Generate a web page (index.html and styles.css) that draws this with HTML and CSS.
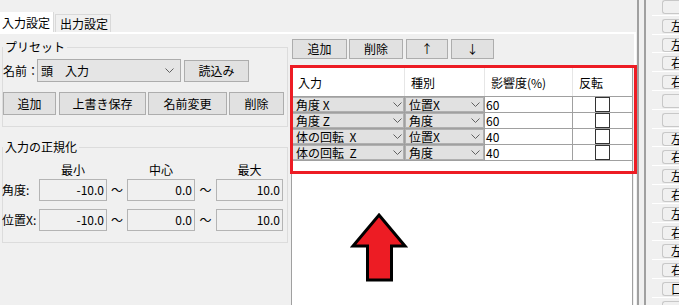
FILE: index.html
```html
<!DOCTYPE html>
<html lang="ja">
<head>
  <meta charset="UTF-8">
  <meta name="viewport" content="width=device-width, initial-scale=1.0">
  <title>入力設定</title>
  <link rel="stylesheet" href="styles.css">
</head>
<body>
  <div class="app">
    <div class="main">
      <div class="tabs">
        <div class="tab active">入力設定</div>
        <div class="tab">出力設定</div>
      </div>
      <div class="page">
        <div class="left">
          <fieldset class="group preset">
            <legend>プリセット</legend>
            <div class="preset-row">
              <span class="name-label">名前：</span>
              <div class="combo preset-combo">
                <span>頭　入力</span>
                <svg class="chev" width="9" height="5" viewBox="0 0 9 5"><polyline points="0.5,0.5 4.5,4.5 8.5,0.5" fill="none" stroke="#606060" stroke-width="1"/></svg>
              </div>
              <button class="btn load">読込み</button>
            </div>
            <div class="preset-buttons">
              <button class="btn b-add">追加</button>
              <button class="btn b-save">上書き保存</button>
              <button class="btn b-rename">名前変更</button>
              <button class="btn b-del">削除</button>
            </div>
          </fieldset>

          <fieldset class="group norm">
            <legend>入力の正規化</legend>
            <div class="norm-head">
              <span class="norm-label"></span>
              <span class="head w68">最小</span>
              <span class="tilde"></span>
              <span class="head w68">中心</span>
              <span class="tilde t21"></span>
              <span class="head w67">最大</span>
            </div>
            <div class="norm-row">
              <span class="norm-label">角度:</span>
              <div class="field w68">-10.0</div>
              <span class="tilde">～</span>
              <div class="field w68">0.0</div>
              <span class="tilde t21">～</span>
              <div class="field w67">10.0</div>
            </div>
            <div class="norm-row second">
              <span class="norm-label">位置X:</span>
              <div class="field w68">-10.0</div>
              <span class="tilde">～</span>
              <div class="field w68">0.0</div>
              <span class="tilde t21">～</span>
              <div class="field w67">10.0</div>
            </div>
          </fieldset>
        </div>

        <div class="right">
          <div class="toolbar">
            <button class="btn t-add">追加</button>
            <button class="btn t-del">削除</button>
            <button class="btn t-up">↑</button>
            <button class="btn t-down">↓</button>
          </div>
          <div class="grid">
            <div class="grid-head">
              <div class="hcell">入力</div>
              <div class="hcell">種別</div>
              <div class="hcell">影響度(%)</div>
              <div class="hcell last">反転</div>
            </div>
            <div class="grid-row">
              <div class="cell combo-cell c1"><span>角度 X</span><svg class="chev" width="9" height="5" viewBox="0 0 9 5"><polyline points="0.5,0.5 4.5,4.5 8.5,0.5" fill="none" stroke="#606060" stroke-width="1"/></svg></div>
              <div class="cell combo-cell c2"><span>位置X</span><svg class="chev" width="9" height="5" viewBox="0 0 9 5"><polyline points="0.5,0.5 4.5,4.5 8.5,0.5" fill="none" stroke="#606060" stroke-width="1"/></svg></div>
              <div class="cell num">60</div>
              <div class="cell check-cell last"><span class="check"></span></div>
            </div>
            <div class="grid-row">
              <div class="cell combo-cell c1"><span>角度 Z</span><svg class="chev" width="9" height="5" viewBox="0 0 9 5"><polyline points="0.5,0.5 4.5,4.5 8.5,0.5" fill="none" stroke="#606060" stroke-width="1"/></svg></div>
              <div class="cell combo-cell c2"><span>角度</span><svg class="chev" width="9" height="5" viewBox="0 0 9 5"><polyline points="0.5,0.5 4.5,4.5 8.5,0.5" fill="none" stroke="#606060" stroke-width="1"/></svg></div>
              <div class="cell num">60</div>
              <div class="cell check-cell last"><span class="check"></span></div>
            </div>
            <div class="grid-row">
              <div class="cell combo-cell c1"><span>体の回転  X</span><svg class="chev" width="9" height="5" viewBox="0 0 9 5"><polyline points="0.5,0.5 4.5,4.5 8.5,0.5" fill="none" stroke="#606060" stroke-width="1"/></svg></div>
              <div class="cell combo-cell c2"><span>位置X</span><svg class="chev" width="9" height="5" viewBox="0 0 9 5"><polyline points="0.5,0.5 4.5,4.5 8.5,0.5" fill="none" stroke="#606060" stroke-width="1"/></svg></div>
              <div class="cell num">40</div>
              <div class="cell check-cell last"><span class="check"></span></div>
            </div>
            <div class="grid-row">
              <div class="cell combo-cell c1"><span>体の回転  Z</span><svg class="chev" width="9" height="5" viewBox="0 0 9 5"><polyline points="0.5,0.5 4.5,4.5 8.5,0.5" fill="none" stroke="#606060" stroke-width="1"/></svg></div>
              <div class="cell combo-cell c2"><span>角度</span><svg class="chev" width="9" height="5" viewBox="0 0 9 5"><polyline points="0.5,0.5 4.5,4.5 8.5,0.5" fill="none" stroke="#606060" stroke-width="1"/></svg></div>
              <div class="cell num">40</div>
              <div class="cell check-cell last"><span class="check"></span></div>
            </div>
          </div>
        </div>
      </div>
    </div>

    <div class="splitter"></div>

    <div class="side">
      <div class="side-row"><span class="side-btn"></span></div>
      <div class="side-row"><span class="side-btn">左</span></div>
      <div class="side-row"><span class="side-btn">左</span></div>
      <div class="side-row"><span class="side-btn">右</span></div>
      <div class="side-row"><span class="side-btn">右</span></div>
      <div class="side-row"><span class="side-btn"></span></div>
      <div class="side-row"><span class="side-btn"></span></div>
      <div class="side-row"><span class="side-btn">左</span></div>
      <div class="side-row"><span class="side-btn">右</span></div>
      <div class="side-row"><span class="side-btn">左</span></div>
      <div class="side-row"><span class="side-btn">右</span></div>
      <div class="side-row"><span class="side-btn">左</span></div>
      <div class="side-row"><span class="side-btn">右</span></div>
      <div class="side-row"><span class="side-btn">左</span></div>
      <div class="side-row"><span class="side-btn">右</span></div>
      <div class="side-row"><span class="side-btn">口</span></div>
      <div class="side-row"><span class="side-btn"></span></div>
    </div>
  </div>

  <!-- annotation drawn over the screenshot -->
  <div class="annot-box"></div>
  <svg class="annot-arrow" width="64" height="78" viewBox="0 0 64 78">
    <polygon points="31,7 57,38 43.5,38 43.5,72 19.5,72 19.5,38 5,38" fill="#ed1c24" stroke="#000" stroke-width="3" stroke-linejoin="miter"/>
  </svg>
</body>
</html>
```

FILE: styles.css
```css
* {
  box-sizing: border-box;
}
body {
  margin: 0;
  width: 679px;
  height: 305px;
  overflow: hidden;
  position: relative;
  background-color: #f0f0f0;
  font-family: "Noto Sans CJK JP", "Noto Sans", sans-serif;
  font-size: 12px;
  line-height: 14px;
  color: #000;
}
.app {
  display: flex;
  height: 305px;
}
.main {
  width: 636px;
  flex: none;
}

/* tabs */
.tabs {
  height: 32px;
  display: flex;
  align-items: flex-end;
}
.tab {
  height: 18px;
  width: 56px;
  margin-left: 1px;
  padding: 2px 0 0 4px;
  border: 1px solid #d9d9d9;
  border-bottom: none;
  white-space: nowrap;
}
.tab.active {
  height: 20px;
  width: 54px;
  margin-left: 0;
  padding: 4px 0 0 2px;
  background: #fff;
  border: none;
  border-right: 1px solid #d9d9d9;
}
.page {
  display: flex;
  height: 273px;
  border-top: 2px solid #fff;
  border-right: 2px solid #fff;
}

/* left column */
.left {
  width: 290px;
  flex: none;
}
.group {
  margin: 6px 0 0 2px;
  padding: 5px 0 11px 0;
  width: 286px;
  min-width: 0;
  border: 1px solid #dcdcdc;
}
.group legend {
  padding: 0 2px;
  line-height: 14px;
}
.group.norm {
  margin-top: 13px;
  padding-top: 9px;
}
.preset-row {
  display: flex;
  align-items: center;
  height: 23px;
}
.name-label {
  width: 34px;
  white-space: nowrap;
}
.combo {
  display: flex;
  align-items: center;
  justify-content: space-between;
  background: #e5e5e5;
  border: 1px solid #acacac;
}
.preset-combo {
  width: 144px;
  height: 23px;
  padding: 0 6px 0 3px;
}
.chev {
  display: block;
  flex: none;
}
.btn {
  font: inherit;
  color: #000;
  background: #e1e1e1;
  border: 1px solid #adadad;
  padding: 0;
  margin: 0;
  text-align: center;
}
.load {
  width: 65px;
  height: 22px;
  margin-left: 3px;
}
.preset-buttons {
  display: flex;
  margin-top: 10px;
}
.preset-buttons .btn {
  height: 23px;
}
.b-add { width: 53px; }
.b-save { width: 87px; margin-left: 3px; }
.b-rename { width: 79px; margin-left: 2px; }
.b-del { width: 55px; margin-left: 2px; }

.norm-head {
  display: flex;
  height: 16px;
}
.norm-row {
  display: flex;
  align-items: center;
  height: 22px;
}
.norm-row.second {
  margin-top: 8px;
}
.norm-label {
  width: 37px;
  flex: none;
  white-space: nowrap;
  margin-left: -1px;
  padding-right: 1px;
}
.head {
  text-align: center;
}
.w68 { width: 68px; flex: none; }
.w67 { width: 67px; flex: none; }
.tilde {
  width: 20px;
  flex: none;
  text-align: center;
}
.tilde.t21 {
  width: 21px;
}
.field {
  height: 22px;
  padding: 3px 2px 0 0;
  text-align: right;
  background: #f0f0f0;
  border: 1px solid #b4b4b4;
}

/* right column with grid */
.right {
  width: 344px;
  flex: none;
  padding: 0 1px;
  display: flex;
  flex-direction: column;
}
.toolbar {
  display: flex;
  margin-top: 5px;
  padding-left: 1px;
}
.toolbar .btn {
  height: 20px;
}
.t-add { width: 55px; }
.t-del { width: 54px; margin-left: 2px; }
.t-up { width: 42px; margin-left: 3px; }
.t-down { width: 43px; margin-left: 3px; }

.grid {
  flex: 1;
  margin-top: 7px;
  background: #fff;
  border-left: 1px solid #a0a0a0;
  border-right: 1px solid #a0a0a0;
}
.grid-head,
.grid-row {
  display: grid;
  grid-template-columns: 113px 80px 88px 59px;
}
.grid-head {
  height: 31px;
  border-bottom: 1px solid #a0a0a0;
}
.hcell {
  padding: 10px 0 0 6px;
  border-right: 1px solid #e6e6e6;
  white-space: nowrap;
}
.hcell.last {
  border-right: none;
}
.grid-row {
  height: 16px;
}
.cell {
  height: 16px;
  line-height: 15px;
  border-right: 1px solid #a0a0a0;
  border-bottom: 1px solid #a0a0a0;
  white-space: pre;
}
.cell.last {
  border-right: none;
}
.combo-cell {
  display: flex;
  align-items: center;
  justify-content: space-between;
  background: #e1e1e1;
  box-shadow: inset 0 0 0 1px #b0b0b0;
}
.combo-cell.c1 {
  padding: 0 2px 0 4px;
}
.combo-cell.c2 {
  padding: 0 4px 0 4px;
}
.num {
  padding-left: 1px;
}
.check-cell {
  display: flex;
  justify-content: center;
}
.check {
  width: 15px;
  height: 15px;
  border: 1px solid #333;
  background: #fff;
}

/* splitter and side list */
.splitter {
  width: 9px;
  flex: none;
  margin-left: 1px;
  border-left: 2px solid #a0a0a0;
  border-right: 2px solid #a0a0a0;
}
.side {
  flex: 1;
  margin-top: -4px;
  overflow: hidden;
}
.side-row {
  height: 18.8px;
  margin-left: 6px;
  border-top: 1px solid #fff;
}
.side-btn {
  display: block;
  height: 14px;
  width: 40px;
  margin: 3px 0 0 10px;
  padding-left: 8px;
  line-height: 12px;
  border: 1px solid #c8c8c8;
  border-right: none;
  border-radius: 3px 0 0 3px;
  background: #f0f0f0;
}

/* annotation overlay */
.annot-box {
  position: absolute;
  left: 290px;
  top: 65px;
  width: 347px;
  height: 109px;
  border: 3px solid #ed1c24;
}
.annot-arrow {
  position: absolute;
  left: 348px;
  top: 208px;
}
```
